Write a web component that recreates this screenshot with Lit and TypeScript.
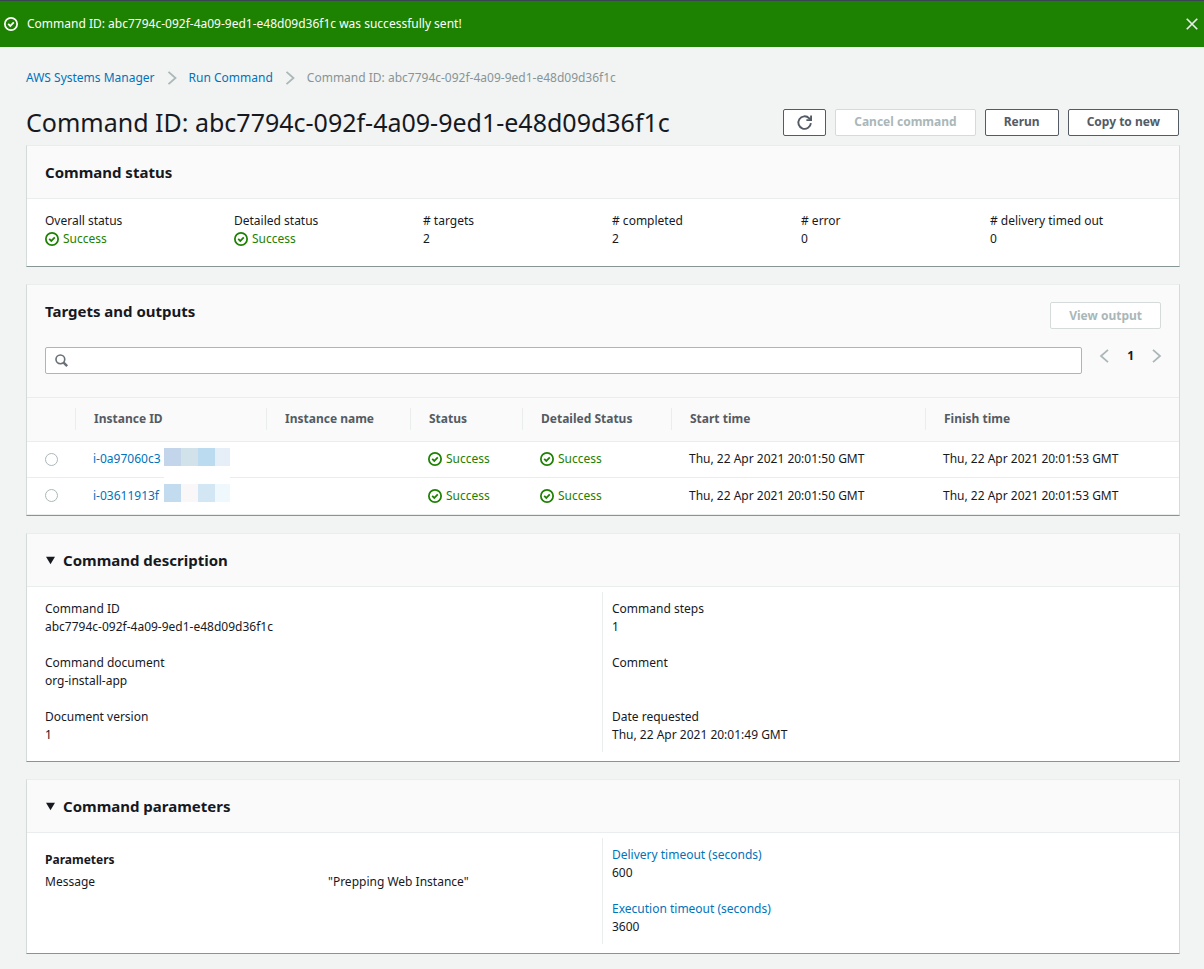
import { LitElement, html, css, svg } from "lit";
import { customElement, property, state } from "lit/decorators.js";

interface Instance {
  id: string;
  mask: string[];
  start: string;
  finish: string;
}

const COMMAND_ID = "abc7794c-092f-4a09-9ed1-e48d09d36f1c";

const INSTANCES: Instance[] = [
  {
    id: "i-0a97060c3",
    mask: ["#c3d5ea", "#d2e2ea", "#bbdbf0", "#e6eff8"],
    start: "Thu, 22 Apr 2021 20:01:50 GMT",
    finish: "Thu, 22 Apr 2021 20:01:53 GMT",
  },
  {
    id: "i-03611913f",
    mask: ["#c3dbee", "#f9f7f8", "#d3e6f4", "#eff8fc"],
    start: "Thu, 22 Apr 2021 20:01:50 GMT",
    finish: "Thu, 22 Apr 2021 20:01:53 GMT",
  },
];

const icons = {
  check: svg`<circle cx="8" cy="8" r="7" /><path d="M4.8 7.8l2.4 2.4 4-4" />`,
  close: svg`<path d="M2 2l12 12M14 2L2 14" />`,
  right: svg`<path d="M4 1l8 7-8 7" />`,
  left: svg`<path d="M12 1L4 8l8 7" />`,
  refresh: svg`<path d="M14.8 8.6A6.7 6.7 0 1 1 13 3.5L14.6 5" /><path d="M15 .4V5.4H10" />`,
  search: svg`<circle cx="6.6" cy="6.6" r="5.4" /><path class="thick" d="M10.6 10.6L15 15" />`,
  caret: svg`<path class="solid" d="M1.5 4h13L8 15z" />`,
};

@customElement("ui-icon")
export class UiIcon extends LitElement {
  static styles = css`
    :host {
      display: inline-flex;
      flex: none;
      width: 14px;
      height: 14px;
    }
    svg {
      width: 100%;
      height: 100%;
      overflow: visible;
      fill: none;
      stroke: currentColor;
      stroke-width: 2;
    }
    .solid {
      fill: currentColor;
      stroke: none;
    }
    .thick {
      stroke-width: 3;
    }
  `;

  @property() name: keyof typeof icons = "check";

  render() {
    return html`<svg viewBox="0 0 16 16" preserveAspectRatio="xMidYMid slice" aria-hidden="true">
      ${icons[this.name]}
    </svg>`;
  }
}

@customElement("app-root")
export class AppRoot extends LitElement {
  static styles = css`
    :host {
      display: block;
      box-sizing: border-box;
      min-height: 100vh;
      background: #f2f3f3;
      color: #16191f;
      font: 12px/18px "Noto Sans", "Open Sans", sans-serif;
    }
    *,
    *::before {
      box-sizing: border-box;
    }
    h1,
    h2,
    h3,
    dl,
    dd,
    p,
    ol {
      margin: 0;
      padding: 0;
    }
    a {
      color: #0073bb;
      text-decoration: none;
    }
    button {
      font: inherit;
      cursor: pointer;
    }
    button:disabled {
      cursor: default;
    }

    .flash {
      display: flex;
      align-items: center;
      gap: 9px;
      height: 47px;
      padding: 0 5px 0 4px;
      border-top: 1px solid #3a4553;
      background: #1d8102;
      color: #fff;
    }
    .flash p {
      flex: 1;
    }
    .plain {
      display: inline-flex;
      padding: 0;
      border: 0;
      background: none;
      color: #aab7b8;
    }
    .flash .plain {
      color: #e9ebed;
    }

    .page {
      padding: 22px 24px 14px 26px;
    }
    .crumbs {
      display: flex;
      align-items: center;
      gap: 10px;
      height: 18px;
      list-style: none;
      color: #879596;
    }
    .crumbs li {
      display: flex;
      align-items: center;
      gap: 10px;
    }
    .crumbs ui-icon {
      color: #aab7b8;
    }

    .heading {
      display: flex;
      align-items: center;
      justify-content: space-between;
      height: 36px;
      margin: 17px 0 5px;
    }
    h1 {
      font-size: 25px;
      line-height: 36px;
      font-weight: 400;
      white-space: nowrap;
    }
    .actions {
      display: flex;
      gap: 9px;
      padding-right: 1px;
    }
    .btn {
      display: inline-flex;
      align-items: center;
      height: 27px;
      padding: 0 18px;
      border: 1px solid #545b64;
      border-radius: 2px;
      background: #fff;
      color: #545b64;
      font-weight: 700;
      white-space: nowrap;
    }
    .btn:disabled {
      border-color: #d5dbdb;
      color: #aab7b8;
    }
    .btn.icon {
      padding: 0 13px;
    }
    .btn ui-icon {
      width: 15px;
      height: 15px;
    }

    .panel {
      display: block;
      margin-bottom: 17px;
      border: 1px solid #d5dbdb;
      border-top-color: #eaeded;
      border-bottom-color: #879596;
      background: #fff;
    }
    .panel > header,
    summary {
      display: flex;
      align-items: center;
      gap: 7px;
      height: 53px;
      padding: 0 18px;
      border-bottom: 1px solid #eaeded;
      background: #fafafa;
    }
    summary {
      list-style: none;
      cursor: pointer;
    }
    summary ui-icon {
      width: 11px;
      height: 11px;
    }
    h2 {
      font-size: 15px;
      line-height: 18px;
      font-weight: 700;
    }

    .ok {
      display: inline-flex;
      align-items: center;
      gap: 4px;
      color: #1d8102;
    }
    .stats {
      display: grid;
      grid-template-columns: repeat(6, 1fr);
      padding: 13px 9px 18px;
    }
    .stats > div {
      padding: 0 9px;
    }
    dd {
      height: 18px;
    }
    dd .ok {
      height: 18px;
      vertical-align: top;
    }

    .panel > header.tools {
      display: block;
      height: auto;
      padding: 17px 18px 23px;
    }
    .row {
      display: flex;
      align-items: start;
      justify-content: space-between;
    }
    .filter {
      display: flex;
      gap: 18px;
      align-items: start;
      margin-top: 18px;
    }
    .search {
      flex: 1;
      display: flex;
      align-items: center;
      gap: 9px;
      height: 27px;
      padding: 0 9px;
      border: 1px solid #aab7b8;
      border-radius: 2px;
      background: #fff;
      color: #687078;
    }
    .search ui-icon {
      width: 13px;
      height: 13px;
    }
    .search input {
      flex: 1;
      min-width: 0;
      padding: 0;
      border: 0;
      outline: 0;
      background: none;
      font: inherit;
    }
    .pager {
      display: flex;
      align-items: center;
      gap: 18px;
      height: 18px;
      font-weight: 700;
    }
    .pager ui-icon {
      width: 9px;
    }

    table {
      width: 100%;
      border-collapse: collapse;
      table-layout: fixed;
    }
    .c-pick {
      width: 49px;
    }
    .c-id {
      width: 191px;
    }
    .c-name {
      width: 144px;
    }
    .c-status {
      width: 112px;
    }
    .c-detail {
      width: 149px;
    }
    .c-start {
      width: 254px;
    }
    th,
    td {
      padding: 0;
      text-align: left;
      white-space: nowrap;
    }
    thead tr {
      height: 43px;
      border-bottom: 1px solid #eaeded;
      background: #fafafa;
      color: #545b64;
    }
    th div {
      height: 22px;
      padding-left: 18px;
      border-right: 1px solid #eaeded;
      line-height: 22px;
    }
    th:last-child div {
      border-right: 0;
    }
    tbody tr {
      height: 36px;
      border-bottom: 1px solid #eaeded;
    }
    tbody tr:last-child {
      height: 37px;
    }
    td {
      padding-left: 17px;
    }
    td:first-child {
      padding-left: 18px;
    }
    td .ok {
      vertical-align: middle;
    }
    td input {
      appearance: none;
      display: block;
      width: 13px;
      height: 13px;
      margin: 0;
      border: 1px solid #aab7b8;
      border-radius: 50%;
      background: #fff;
    }
    td input:checked {
      border: 4px solid #0073bb;
    }
    .instance {
      display: flex;
      align-items: center;
    }
    .instance a {
      width: 71px;
      overflow: hidden;
    }
    .mask {
      display: flex;
      height: 18px;
      margin-bottom: 5px;
      box-shadow: 0 12px 0 #fff;
    }
    .mask i {
      width: 17px;
    }
    .mask i:last-child {
      width: 15px;
    }
    tr:last-child .mask {
      box-shadow: none;
    }

    .split {
      display: grid;
      grid-template-columns: 1fr 1fr;
      padding: 5px 9px 9px;
    }
    .split > * {
      display: grid;
      align-content: start;
      gap: 18px;
      padding: 8px 9px;
    }
    .split > :first-child {
      border-right: 1px solid #eaeded;
    }
    .split > .params {
      gap: 4px;
      padding-top: 13px;
    }
    h3 {
      font: inherit;
      font-weight: 700;
    }
    .pair {
      display: grid;
      grid-template-columns: 1fr 1fr;
      column-gap: 18px;
    }
  `;

  @state() private selected = "";
  @state() private flash = true;

  private ok() {
    return html`<span class="ok"><ui-icon name="check"></ui-icon>Success</span>`;
  }

  private term(label: unknown, value: unknown) {
    return html`<div><dt>${label}</dt><dd>${value}</dd></div>`;
  }

  private row(item: Instance) {
    return html`<tr>
      <td>
        <input
          type="radio"
          name="instance"
          aria-label="Select ${item.id}"
          .checked=${this.selected === item.id}
          @change=${() => (this.selected = item.id)}
        />
      </td>
      <td>
        <div class="instance">
          <a href="#instance">${item.id}</a>
          <span class="mask">${item.mask.map((c) => html`<i style="background:${c}"></i>`)}</span>
        </div>
      </td>
      <td></td>
      <td>${this.ok()}</td>
      <td>${this.ok()}</td>
      <td>${item.start}</td>
      <td>${item.finish}</td>
    </tr>`;
  }

  render() {
    return html`
      ${this.flash
        ? html`<div class="flash" role="status">
            <ui-icon name="check"></ui-icon>
            <p>Command ID: ${COMMAND_ID} was successfully sent!</p>
            <button class="plain" aria-label="Dismiss" @click=${() => (this.flash = false)}>
              <ui-icon name="close"></ui-icon>
            </button>
          </div>`
        : null}
      <main class="page">
        <nav aria-label="Breadcrumb">
          <ol class="crumbs">
            <li><a href="#ssm">AWS Systems Manager</a><ui-icon name="right"></ui-icon></li>
            <li><a href="#run">Run Command</a><ui-icon name="right"></ui-icon></li>
            <li>Command ID: ${COMMAND_ID}</li>
          </ol>
        </nav>
        <div class="heading">
          <h1>Command ID: ${COMMAND_ID}</h1>
          <div class="actions">
            <button class="btn icon" aria-label="Refresh"><ui-icon name="refresh"></ui-icon></button>
            <button class="btn" disabled>Cancel command</button>
            <button class="btn">Rerun</button>
            <button class="btn">Copy to new</button>
          </div>
        </div>

        <section class="panel">
          <header><h2>Command status</h2></header>
          <dl class="stats">
            ${this.term("Overall status", this.ok())} ${this.term("Detailed status", this.ok())}
            ${this.term("# targets", "2")} ${this.term("# completed", "2")}
            ${this.term("# error", "0")} ${this.term("# delivery timed out", "0")}
          </dl>
        </section>

        <section class="panel">
          <header class="tools">
            <div class="row">
              <h2>Targets and outputs</h2>
              <button class="btn" disabled>View output</button>
            </div>
            <div class="filter">
              <label class="search">
                <ui-icon name="search"></ui-icon>
                <input type="text" aria-label="Search targets" />
              </label>
              <div class="pager">
                <button class="plain" aria-label="Previous page"><ui-icon name="left"></ui-icon></button>
                <span>1</span>
                <button class="plain" aria-label="Next page"><ui-icon name="right"></ui-icon></button>
              </div>
            </div>
          </header>
          <table>
            <colgroup>
              <col class="c-pick" />
              <col class="c-id" />
              <col class="c-name" />
              <col class="c-status" />
              <col class="c-detail" />
              <col class="c-start" />
              <col />
            </colgroup>
            <thead>
              <tr>
                ${["", "Instance ID", "Instance name", "Status", "Detailed Status", "Start time", "Finish time"].map(
                  (t) => html`<th scope="col"><div>${t}</div></th>`
                )}
              </tr>
            </thead>
            <tbody>
              ${INSTANCES.map((i) => this.row(i))}
            </tbody>
          </table>
        </section>

        <details class="panel" open>
          <summary><ui-icon name="caret"></ui-icon><h2>Command description</h2></summary>
          <div class="split">
            <dl>
              ${this.term("Command ID", COMMAND_ID)} ${this.term("Command document", "org-install-app")}
              ${this.term("Document version", "1")}
            </dl>
            <dl>
              ${this.term("Command steps", "1")} ${this.term("Comment", "")}
              ${this.term("Date requested", "Thu, 22 Apr 2021 20:01:49 GMT")}
            </dl>
          </div>
        </details>

        <details class="panel" open>
          <summary><ui-icon name="caret"></ui-icon><h2>Command parameters</h2></summary>
          <div class="split">
            <div class="params">
              <h3>Parameters</h3>
              <div class="pair"><span>Message</span><span>"Prepping Web Instance"</span></div>
            </div>
            <dl>
              ${this.term(html`<a href="#delivery">Delivery timeout (seconds)</a>`, "600")}
              ${this.term(html`<a href="#execution">Execution timeout (seconds)</a>`, "3600")}
            </dl>
          </div>
        </details>
      </main>
    `;
  }
}
